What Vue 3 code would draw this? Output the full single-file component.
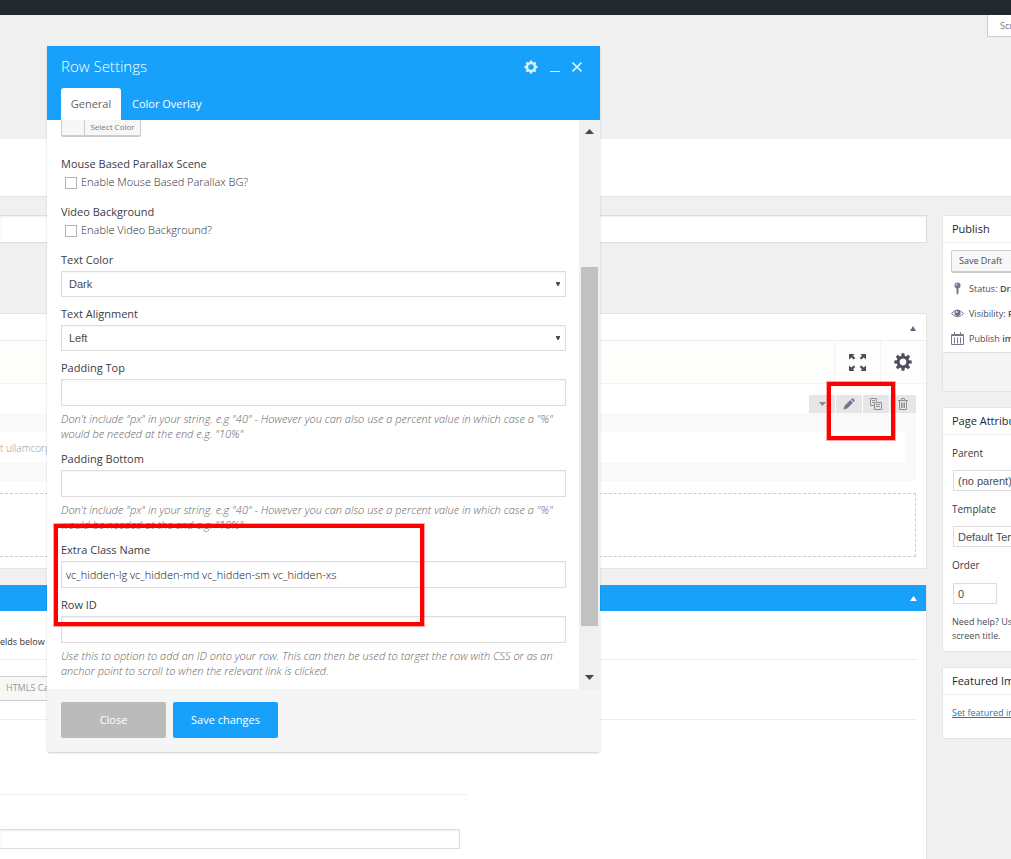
<script setup>
import { ref } from 'vue'

const parallaxScene = ref(false)
const videoBackground = ref(false)
const textColor = ref('Dark')
const textAlign = ref('Left')
const paddingTop = ref('')
const paddingBottom = ref('')
const extraClass = ref('vc_hidden-lg vc_hidden-md vc_hidden-sm vc_hidden-xs')
const rowId = ref('')
const order = ref('0')
const paddingHint =
  'Don\'t include "px" in your string. e.g "40" - However you can also use a percent value in which case a "%" would be needed at the end e.g. "10%"'
const gearTeeth = [0, 45, 90, 135, 180, 225, 270, 315]
</script>

<template>
  <div class="page">
    <div class="adminbar"></div>
    <div class="screen-meta">
      <button type="button" class="screen-options">Screen Options</button>
    </div>
    <div class="band"></div>

    <div class="columns">
      <main class="main">
        <input class="title-input" type="text" aria-label="Title" />

        <section class="panel builder">
          <div class="panel-head">
            <svg width="6" height="5" viewBox="0 0 6 5"><path d="M3 0L6 5H0z" fill="#66617e" /></svg>
          </div>
          <div class="toolbar">
            <button type="button" class="tool" aria-label="Full screen">
              <svg width="17" height="17" viewBox="0 0 17 17" fill="#4d4b5c">
                <path d="M0 0h5.500L4 1.700l2.300 2.300-1.600 1.600L2.300 3.500 0 5.500zM17 0h-5.500L13 1.700 10.700 4l1.600 1.600 2.400-2.100L17 5.500zM0 17h5.500L4 15.300 6.300 13l-1.600-1.600-2.400 2.100L0 11.500zM17 17h-5.500l1.500-1.700L10.700 13l1.600-1.600 2.400 2.100 2.300-2z" />
              </svg>
            </button>
            <button type="button" class="tool last" aria-label="Settings">
              <svg width="18" height="18" viewBox="-9 -9 18 18">
                <circle r="4.800" fill="none" stroke="#4d4b5c" stroke-width="2.800" />
                <path v-for="a in gearTeeth" :key="a" :transform="`rotate(${a})`" d="M-1.800 -5.500L-1.400 -8.700H1.400L1.800 -5.500z" fill="#4d4b5c" />
              </svg>
            </button>
          </div>
          <div class="canvas">
            <div class="row-controls">
              <button type="button" class="ctl" aria-label="Toggle row">
                <svg width="7" height="4" viewBox="0 0 7 4"><path d="M0 0h7L3.500 4z" fill="#8b8a92" /></svg>
              </button>
              <button type="button" class="ctl" aria-label="Edit row">
                <svg width="12" height="12" viewBox="0 0 12 12" fill="#77758a">
                  <path d="M0.500 11.500L1.600 7.800 7.300 2.100 9.900 4.700 4.200 10.400zM8 1.400L9 0.500Q9.600 0 10.200 0.600L11.400 1.800Q12 2.400 11.500 3L10.600 4z" />
                </svg>
              </button>
              <button type="button" class="ctl" aria-label="Clone row">
                <svg width="12" height="12" viewBox="0 0 12 12" fill="none" stroke="#8f8f94">
                  <path d="M4 7.500H0.500V0.500H6.500V3.500M2 2.500H5M2 4.500H4M4.500 4.500H11.500V11.500H4.500zM6 6.500H10M6 8.500H10" />
                </svg>
              </button>
              <button type="button" class="ctl" aria-label="Delete row">
                <svg width="10" height="12" viewBox="0 0 10 12" fill="none" stroke="#8f8f94">
                  <path d="M0 2.500H10M3.500 2V0.500H6.500V2M1.500 3V11.500H8.500V3M3.500 4.500V10M5 4.500V10M6.500 4.500V10" />
                </svg>
              </button>
            </div>
            <div class="row-body">
              <div class="text-block">t ullamcorp</div>
            </div>
            <div class="dropzone"></div>
          </div>
        </section>

        <section class="panel details">
          <div class="panel-head blue">
            <svg width="7" height="5" viewBox="0 0 7 5"><path d="M3.500 0L7 5H0z" fill="#fff" /></svg>
          </div>
          <div class="details-body">
            <p class="intro">elds below</p>
            <div class="canvas-row">
              <button type="button" class="html5">HTML5 Ca</button>
            </div>
            <div class="short-rule"></div>
            <input class="meta-input" type="text" aria-label="Meta value" />
          </div>
        </section>
      </main>

      <aside class="sidebar">
        <section class="card publish">
          <h2>Publish</h2>
          <div class="publish-body">
            <button type="button" class="draft">Save Draft</button>
            <div class="status">
              <svg width="13" height="13" viewBox="0 0 13 13">
                <circle cx="6.500" cy="3.500" r="3" fill="#77778f" /><circle cx="5.500" cy="2.600" r="1" fill="#c9cbdc" /><path d="M5.500 6h2v5l-1 2-1-2z" fill="#77778f" />
              </svg>
              <span>Status: <b>Draft</b></span>
            </div>
            <div class="status">
              <svg width="13" height="13" viewBox="0 0 13 13">
                <path d="M0.500 6.500Q6.500 -0.500 12.500 6.500 6.500 13 0.500 6.500z" fill="none" stroke="#77778f" /><circle cx="6.500" cy="6" r="3" fill="#6c6c8a" /><circle cx="5.700" cy="5" r="1" fill="#fff" />
              </svg>
              <span>Visibility: <b>Public</b></span>
            </div>
            <div class="status">
              <svg width="13" height="13" viewBox="0 0 13 13" fill="none" stroke="#77778f">
                <path d="M0.500 2.500h12v10h-12zM0.500 3.500h12M3.500 0v3M9.500 0v3M3.500 5.500v6M6.500 5.500v6M9.500 5.500v6" />
              </svg>
              <span>Publish <b>immediately</b></span>
            </div>
          </div>
          <div class="publish-foot"></div>
        </section>

        <section class="card attributes">
          <h2>Page Attributes</h2>
          <div class="attr-body">
            <label for="parent">Parent</label>
            <select id="parent"><option>(no parent)</option></select>
            <label for="template">Template</label>
            <select id="template"><option>Default Template</option></select>
            <label for="order">Order</label>
            <input id="order" v-model="order" type="text" />
            <p>Need help? Use the Help tab<br />screen title.</p>
          </div>
        </section>

        <section class="card featured">
          <h2>Featured Image</h2>
          <div class="featured-body"><a href="#">Set featured image</a></div>
        </section>
      </aside>
    </div>

    <div class="modal" role="dialog" aria-label="Row Settings">
      <header class="modal-head">
        <div class="modal-title">
          <h1>Row Settings</h1>
          <div class="window-buttons">
            <button type="button" aria-label="Options">
              <svg width="14" height="14" viewBox="-7 -7 14 14">
                <circle r="4" fill="none" stroke="#d9f2ff" stroke-width="2.400" />
                <path v-for="a in gearTeeth" :key="a" :transform="`rotate(${a})`" d="M-1.500 -4.800L-1 -6.500H1L1.500 -4.800z" fill="#d9f2ff" />
              </svg>
            </button>
            <button type="button" aria-label="Minimize">
              <svg width="10" height="14" viewBox="0 0 10 14"><path d="M0 11.500H10" stroke="#d9f2ff" /></svg>
            </button>
            <button type="button" aria-label="Close dialog">
              <svg width="10" height="14" viewBox="0 0 10 14"><path d="M0.500 2.500L9.500 11.500M9.500 2.500L0.500 11.500" stroke="#d9f2ff" stroke-width="1.600" /></svg>
            </button>
          </div>
        </div>
        <nav class="tabs">
          <button type="button" class="tab active">General</button>
          <button type="button" class="tab">Color Overlay</button>
        </nav>
      </header>

      <div class="modal-body">
        <form class="fields" @submit.prevent>
          <button type="button" class="picker"><span class="swatch"></span><span class="picker-text">Select Color</span></button>

          <div class="field check">
            <span class="label">Mouse Based Parallax Scene</span>
            <label class="tick"><input v-model="parallaxScene" type="checkbox" />Enable Mouse Based Parallax BG?</label>
          </div>
          <div class="field check">
            <span class="label">Video Background</span>
            <label class="tick"><input v-model="videoBackground" type="checkbox" />Enable Video Background?</label>
          </div>
          <div class="field">
            <label class="label" for="text-color">Text Color</label>
            <div class="select-wrap">
              <select id="text-color" v-model="textColor"><option>Dark</option><option>Light</option></select>
              <svg width="4" height="4" viewBox="0 0 4 4"><path d="M0 0h4v1L2.500 4h-1L0 1z" fill="#4f4655" /></svg>
            </div>
          </div>
          <div class="field">
            <label class="label" for="text-align">Text Alignment</label>
            <div class="select-wrap">
              <select id="text-align" v-model="textAlign"><option>Left</option><option>Center</option><option>Right</option></select>
              <svg width="4" height="4" viewBox="0 0 4 4"><path d="M0 0h4v1L2.500 4h-1L0 1z" fill="#4f4655" /></svg>
            </div>
          </div>
          <div class="field">
            <label class="label" for="padding-top">Padding Top</label>
            <input id="padding-top" v-model="paddingTop" class="text" type="text" />
            <p class="hint">{{ paddingHint }}</p>
          </div>
          <div class="field">
            <label class="label" for="padding-bottom">Padding Bottom</label>
            <input id="padding-bottom" v-model="paddingBottom" class="text" type="text" />
            <p class="hint">{{ paddingHint }}</p>
          </div>
          <div class="field">
            <label class="label" for="extra-class">Extra Class Name</label>
            <input id="extra-class" v-model="extraClass" class="text" type="text" />
          </div>
          <div class="field">
            <label class="label" for="row-id">Row ID</label>
            <input id="row-id" v-model="rowId" class="text" type="text" />
            <p class="hint">Use this to option to add an ID onto your row. This can then be used to target the row with CSS or as an anchor point to scroll to when the relevant link is clicked.</p>
          </div>
        </form>
        <div class="scrollbar">
          <svg width="9" height="5" viewBox="0 0 9 5"><path d="M4.500 0L9 5H0z" fill="#4f4449" /></svg>
          <div class="track">
            <div class="space-above"></div>
            <div class="thumb"></div>
            <div class="space-below"></div>
          </div>
          <svg width="9" height="5" viewBox="0 0 9 5"><path d="M0 0H9L4.500 5z" fill="#4f4449" /></svg>
        </div>
      </div>

      <footer class="modal-foot">
        <button type="button" class="btn close">Close</button>
        <button type="button" class="btn save">Save changes</button>
      </footer>
    </div>

    <div class="mark mark-icons"></div>
    <div class="mark mark-class"></div>
  </div>
</template>

<style>
body {
  margin: 0;
  background: #f0f0f0;
}
</style>

<style scoped>
* {
  box-sizing: border-box;
}
.page {
  position: relative;
  display: flex;
  flex-direction: column;
  height: 100vh;
  overflow: hidden;
  background: #f0f0f0;
  color: #4b4b4f;
  font: 11px/16px "Open Sans", "Noto Sans", sans-serif;
}
button,
input,
select {
  font: inherit;
  color: inherit;
  border-radius: 0;
  margin: 0;
}
button {
  padding: 0;
  border: 0;
  background: none;
}
svg {
  display: block;
  flex: none;
}
h1,
h2,
p {
  margin: 0;
  font-weight: 400;
}
.adminbar {
  flex: none;
  height: 15px;
  background: #23282d;
}
.screen-meta {
  flex: none;
  display: flex;
  justify-content: flex-end;
  height: 124px;
}
.screen-options {
  width: 24px;
  height: 22px;
  padding-left: 12px;
  overflow: hidden;
  white-space: nowrap;
  text-align: left;
  font-size: 9px;
  color: #777;
  background: #fff;
  border: solid #ccc;
  border-width: 0 0 1px 1px;
}
.band {
  flex: none;
  height: 58px;
  background: #fff;
  border-bottom: 1px solid #e2e2e2;
}
.columns {
  flex: 1;
  min-height: 0;
  display: grid;
  grid-template-columns: minmax(0, 1fr) 69px;
  column-gap: 15px;
  padding-top: 18px;
}
.main {
  display: flex;
  flex-direction: column;
  min-height: 0;
}
.title-input {
  flex: none;
  width: 100%;
  height: 28px;
  border: 1px solid #ddd;
  border-left: 0;
  background: #fff;
  box-shadow: inset 0 1px 2px rgba(0, 0, 0, 0.07);
}
.panel {
  background: #fff;
  border: 1px solid #e5e5e5;
  border-left: 0;
}
.builder {
  flex: none;
  margin: 70px 0 16px;
}
.panel-head {
  display: flex;
  align-items: center;
  justify-content: flex-end;
  height: 27px;
  padding: 2px 10px 0 0;
  border-bottom: 1px solid #eee;
}
.panel-head.blue {
  height: 26px;
  background: #18a1fb;
  border: 0;
  padding: 0 9px 0 0;
}
.toolbar {
  display: flex;
  justify-content: flex-end;
  height: 43px;
  background: #fdfdfc;
  border-bottom: 1px solid #f2f2f2;
}
.tool {
  display: flex;
  align-items: center;
  justify-content: center;
  width: 46px;
  border-left: 1px solid #f2f2f2;
}
.tool.last {
  padding-right: 2px;
}
.canvas {
  padding: 11px 10px 11px 0;
}
.row-controls {
  display: flex;
  justify-content: flex-end;
  gap: 1px;
}
.ctl {
  display: flex;
  align-items: center;
  justify-content: center;
  width: 26px;
  height: 18px;
  background: #e6e6e6;
  border-radius: 1px 1px 0 0;
}
.row-body {
  padding: 19px 11px 18px 0;
  background: #f9f9f9;
}
.text-block {
  height: 31px;
  line-height: 32px;
  background: #fff;
  color: #999;
  font-size: 10px;
  font-weight: 300;
  white-space: nowrap;
}
.dropzone {
  height: 64px;
  margin-top: 12px;
  border: 1px dashed #ccc;
  border-left: 0;
}
.details {
  flex: 1;
  min-height: 0;
  border-width: 0 1px 0 0;
}
.details-body {
  padding: 23px 9px 0 0;
}
.intro {
  height: 26px;
  font-size: 9px;
  color: #333;
  border-bottom: 1px solid #eee;
}
.canvas-row {
  padding: 16px 0 18px;
  border-bottom: 1px solid #eee;
}
.html5 {
  display: block;
  width: 90px;
  height: 25px;
  padding: 0 0 2px 6px;
  text-align: left;
  font-size: 9px;
  color: #999;
  background: #f7f7f7;
  border: solid #ccc;
  border-width: 1px 1px 1px 0;
}
.short-rule {
  width: 467px;
  height: 75px;
  border-bottom: 1px solid #eee;
}
.meta-input {
  display: block;
  width: 460px;
  height: 20px;
  margin-top: 34px;
  border: 1px solid #ddd;
  border-left: 0;
  box-shadow: inset 0 1px 2px rgba(0, 0, 0, 0.07);
}
.card {
  width: 280px;
  margin-bottom: 15px;
  background: #fff;
  border: 1px solid #e5e5e5;
}
.card h2 {
  height: 27px;
  padding-left: 9px;
  font-size: 11px;
  line-height: 26px;
  color: #23282d;
  font-weight: 400;
  border-bottom: 1px solid #eee;
}
.publish-body {
  padding: 7px 8px 0;
  height: 110px;
  font-size: 9px;
  border-bottom: 1px solid #ddd;
}
.draft {
  display: block;
  width: 72px;
  height: 22px;
  margin-bottom: 4px;
  padding-left: 7px;
  text-align: left;
  background: #f7f7f7;
  border: 1px solid #ccc;
  border-radius: 2px;
  box-shadow: 0 1px 0 #ccc;
}
.status {
  display: flex;
  align-items: center;
  gap: 5px;
  height: 25px;
}
.status b {
  font-weight: 600;
}
.publish-foot {
  height: 38px;
  background: #f5f5f5;
}
.attr-body {
  display: flex;
  flex-direction: column;
  align-items: flex-start;
  padding: 10px 9px 8px;
  font-size: 10px;
}
.attr-body label {
  color: #3a3a3e;
}
.attr-body select,
.attr-body input {
  height: 21px;
  margin: 9px 1px 10px;
  padding: 0 4px;
  appearance: none;
  font: 11px/16px "Liberation Sans", Arial, sans-serif;
  background: #fff;
  border: 1px solid #ddd;
}
.attr-body input {
  width: 44px;
  margin: 10px 1px 11px;
}
.attr-body p {
  font-size: 9px;
  line-height: 14px;
  white-space: nowrap;
}
.featured-body {
  padding: 10px 9px 17px;
  font-size: 9px;
}
.featured-body a {
  color: #2f72a8;
}
.modal {
  position: absolute;
  left: 47px;
  top: 46px;
  width: 553px;
  background: #fff;
  border-radius: 0 0 3px 3px;
  box-shadow: 0 1px 2px rgba(0, 0, 0, 0.2);
}
.modal-head {
  height: 74px;
  padding: 0 14px;
  background: #18a1fb;
}
.modal-title {
  display: flex;
  align-items: center;
  justify-content: space-between;
  height: 42px;
}
.modal-title h1 {
  padding-bottom: 2px;
  color: #fff;
  font-size: 15px;
  font-weight: 300;
  line-height: 20px;
}
.window-buttons {
  display: flex;
  gap: 12px;
  padding-right: 4px;
}
.tabs {
  display: flex;
}
.tab {
  height: 32px;
  padding: 0 11px;
  color: #fff;
  font-weight: 500;
}
.tab.active {
  width: 60px;
  padding: 0;
  color: #6a6068;
  font-weight: 400;
  background: #fff;
  border-radius: 3px 3px 0 0;
}
.modal-body {
  display: flex;
}
.fields {
  flex: 1;
  display: flex;
  flex-direction: column;
  gap: 9px;
  padding: 0 13px 10px 14px;
}
.picker {
  display: flex;
  align-self: flex-start;
  width: 80px;
  height: 17px;
  margin-bottom: 10px;
  background: #f7f7f7;
  border: solid #ccc;
  border-width: 0 1px 2px;
  border-radius: 0 0 2px 2px;
  font-size: 8px;
  line-height: 14px;
  color: #777;
}
.swatch {
  width: 23px;
  height: 15px;
  border-right: 1px solid #ccc;
}
.picker-text {
  flex: 1;
}
.field {
  display: flex;
  flex-direction: column;
}
.field.check {
  gap: 2px;
  margin-bottom: 5px;
}
.label {
  color: #3c3c44;
  font-weight: 500;
}
.tick {
  display: flex;
  align-items: center;
  gap: 4px;
  padding-left: 4px;
  color: #2f2a34;
  font-weight: 300;
}
.tick input {
  appearance: none;
  width: 12px;
  height: 12px;
  margin-top: 2px;
  border: 1px solid #b4b4b4;
  background: #fff;
}
.select-wrap {
  display: flex;
  align-items: center;
  margin-top: 3px;
  height: 26px;
  padding-right: 5px;
  border: 1px solid #ddd;
  box-shadow: inset 0 1px 2px rgba(0, 0, 0, 0.05);
}
.select-wrap select {
  flex: 1;
  height: 24px;
  padding: 0 7px;
  appearance: none;
  border: 0;
  background: none;
  font: 11px/16px "Liberation Sans", Arial, sans-serif;
}
.text {
  width: 100%;
  height: 27px;
  margin-top: 3px;
  padding: 0 4px;
  border: 1px solid #ddd;
  background: #fff;
  color: #111;
  font-weight: 300;
  box-shadow: inset 0 1px 2px rgba(0, 0, 0, 0.05);
}
.hint {
  margin: 5px 0 1px;
  line-height: 15px;
  font-style: italic;
  font-weight: 300;
  color: #666;
}
.scrollbar {
  display: flex;
  flex-direction: column;
  align-items: center;
  width: 21px;
  padding: 9px 2px 9px;
  background: #f0f0f0;
}
.track {
  flex: 1;
  display: flex;
  flex-direction: column;
  width: 17px;
}
.space-above {
  flex: 133;
}
.thumb {
  flex: 359;
  background: #c1c1c1;
}
.space-below {
  flex: 49;
}
.modal-foot {
  display: flex;
  gap: 7px;
  padding: 13px 14px 14px;
  background: #f5f5f5;
  border-radius: 0 0 3px 3px;
}
.btn {
  width: 105px;
  height: 36px;
  color: #fff;
  border-radius: 2px;
}
.btn.close {
  background: #bbb;
}
.btn.save {
  background: #18a1fb;
}
.mark {
  position: absolute;
  border: 4px solid #fe0000;
  box-shadow: 0 0 0 1px rgba(254, 0, 0, 0.35);
  pointer-events: none;
}
.mark-icons {
  left: 827px;
  top: 382px;
  width: 68px;
  height: 58px;
}
.mark-class {
  left: 54px;
  top: 524px;
  width: 370px;
  height: 102px;
}
</style>
